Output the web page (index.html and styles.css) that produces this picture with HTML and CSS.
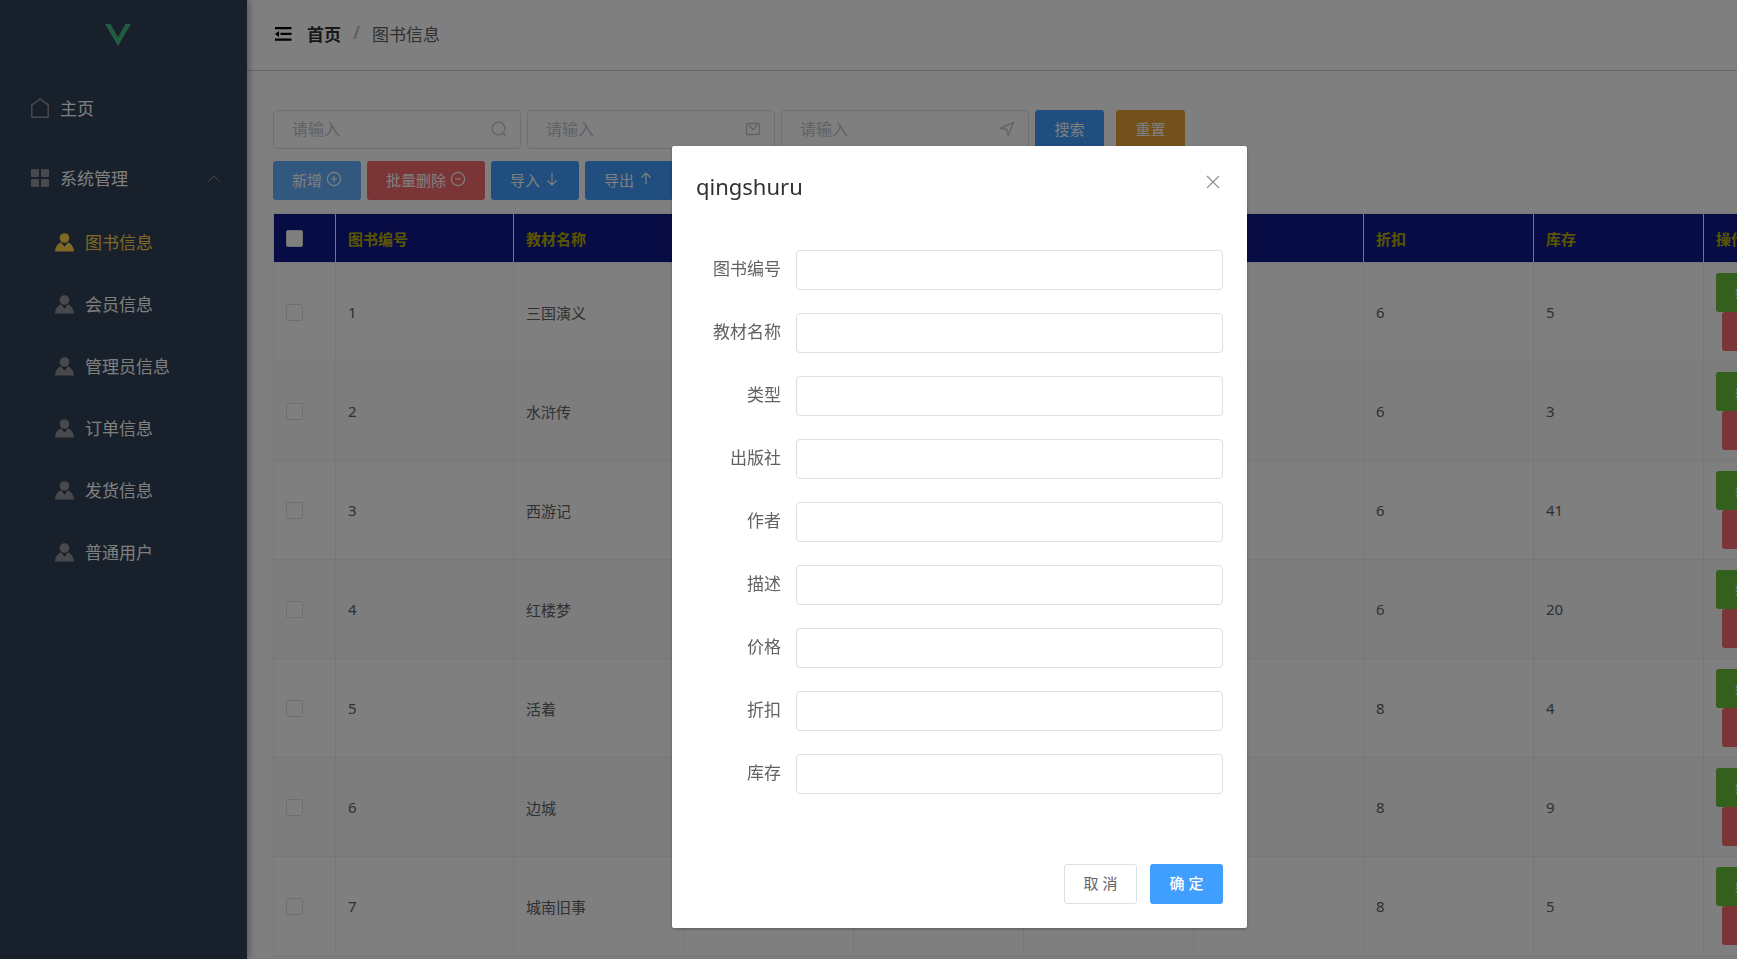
FILE: index.html
```html
<!DOCTYPE html>
<html lang="zh-CN">
<head>
<meta charset="utf-8">
<title>图书信息</title>
<link rel="stylesheet" href="styles.css">
</head>
<body>
<svg class="sprite" aria-hidden="true">
  <symbol id="user" viewBox="0 0 19 19"><circle cx="9.500" cy="5" r="4.800"/><path d="M0 18.500C.3 14 2.400 10.800 6 9.300l3.500 4.400L13 9.300c3.600 1.500 5.700 4.700 6 9.200z"/></symbol>
</svg>
<div class="app">
  <aside class="sidebar">
    <div class="logo">
      <svg width="26" height="22" viewBox="0 0 26 22" aria-label="logo"><path d="M0 0h5.500L13 13 20.500 0H26L13 22z" fill="#41b883"/></svg>
    </div>
    <nav class="menu">
      <a class="item" href="#"><svg class="icon" width="18" height="20" viewBox="0 0 18 20" fill="none" stroke="currentColor" stroke-width="1.500"><path d="M.8 7L9 1l8.200 6v12.200H.8z"/></svg><span>主页</span></a>
      <button class="item" type="button"><svg class="icon" width="18" height="18" viewBox="0 0 18 18" fill="currentColor"><rect width="8" height="8" rx="1"/><rect x="10" width="8" height="8" rx="1"/><rect y="10" width="8" height="8" rx="1"/><rect x="10" y="10" width="8" height="8" rx="1"/></svg><span>系统管理</span><svg class="caret" width="12" height="7" viewBox="0 0 12 7" fill="none" stroke="currentColor"><path d="M.5 6.500L6 1l5.500 5.500"/></svg></button>
      <a class="item sub active" href="#"><svg class="icon"><use href="#user"/></svg><span>图书信息</span></a>
      <a class="item sub" href="#"><svg class="icon"><use href="#user"/></svg><span>会员信息</span></a>
      <a class="item sub" href="#"><svg class="icon"><use href="#user"/></svg><span>管理员信息</span></a>
      <a class="item sub" href="#"><svg class="icon"><use href="#user"/></svg><span>订单信息</span></a>
      <a class="item sub" href="#"><svg class="icon"><use href="#user"/></svg><span>发货信息</span></a>
      <a class="item sub" href="#"><svg class="icon"><use href="#user"/></svg><span>普通用户</span></a>
    </nav>
  </aside>
  <div class="main">
    <header class="topbar">
      <button class="fold" type="button" aria-label="折叠菜单"><svg width="17" height="14" viewBox="0 0 17 14" fill="#000"><path d="M0 0h16.500v2.300H0zM5.500 5.800h11v2.300h-11zM0 11.500h16.500v2.300H0zM0 7l4-3v6z"/></svg></button>
      <nav class="crumbs"><a class="home" href="#">首页</a><span class="slash">/</span><span>图书信息</span></nav>
    </header>
    <main class="content">
      <form class="filters">
        <label class="field"><input type="text" placeholder="请输入" aria-label="搜索"><svg width="16" height="16" viewBox="0 0 16 16"><circle cx="7.500" cy="7.500" r="6.300"/><path d="M12 12l3 3"/></svg></label>
        <label class="field"><input type="text" placeholder="请输入" aria-label="邮件"><svg width="16" height="16" viewBox="0 0 16 16"><rect x="1.500" y="2.500" width="13" height="11" rx="1"/><path d="M3.500 4L8 8.500 12.500 4"/></svg></label>
        <label class="field"><input type="text" placeholder="请输入" aria-label="位置"><svg width="16" height="16" viewBox="0 0 16 16"><path d="M1.500 7.200L14.500 1.500 9.200 14.600 7.800 8.400z"/></svg></label>
        <div class="actions"><button class="btn primary" type="button">搜索</button><button class="btn warning" type="button">重置</button></div>
      </form>
      <div class="tools">
        <button class="btn light" type="button">新增<svg width="16" height="16" viewBox="0 0 16 16"><circle cx="8" cy="8" r="6.600"/><path d="M5 8h6M8 5v6"/></svg></button>
        <button class="btn danger" type="button">批量删除<svg width="16" height="16" viewBox="0 0 16 16"><circle cx="8" cy="8" r="6.600"/><path d="M5 8h6"/></svg></button>
        <button class="btn primary" type="button">导入<svg width="16" height="16" viewBox="0 0 16 16"><path d="M8 2v12M3.500 9.500L8 14l4.500-4.500"/></svg></button>
        <button class="btn primary" type="button">导出<svg width="16" height="16" viewBox="0 0 16 16"><path d="M8 13V2M3.500 6.500L8 2l4.500 4.500"/></svg></button>
      </div>
      <table class="grid">
        <colgroup><col class="c-check"><col class="c-id"><col class="c"><col class="c"><col class="c"><col class="c"><col class="c"><col class="c"><col class="c"><col class="c-op"></colgroup>
        <thead><tr><th><input type="checkbox" aria-label="全选"></th><th>图书编号</th><th>教材名称</th><th>类型</th><th>出版社</th><th>作者</th><th>价格</th><th>折扣</th><th>库存</th><th>操作</th></tr></thead>
        <tbody>
          <tr><td><input type="checkbox" aria-label="选择 1"></td><td>1</td><td>三国演义</td><td></td><td></td><td></td><td></td><td>6</td><td>5</td><td><div class="ops"><button class="btn success" type="button">编辑</button><button class="btn danger" type="button">删除</button></div></td></tr>
          <tr><td><input type="checkbox" aria-label="选择 2"></td><td>2</td><td>水浒传</td><td></td><td></td><td></td><td></td><td>6</td><td>3</td><td><div class="ops"><button class="btn success" type="button">编辑</button><button class="btn danger" type="button">删除</button></div></td></tr>
          <tr><td><input type="checkbox" aria-label="选择 3"></td><td>3</td><td>西游记</td><td></td><td></td><td></td><td></td><td>6</td><td>41</td><td><div class="ops"><button class="btn success" type="button">编辑</button><button class="btn danger" type="button">删除</button></div></td></tr>
          <tr><td><input type="checkbox" aria-label="选择 4"></td><td>4</td><td>红楼梦</td><td></td><td></td><td></td><td></td><td>6</td><td>20</td><td><div class="ops"><button class="btn success" type="button">编辑</button><button class="btn danger" type="button">删除</button></div></td></tr>
          <tr><td><input type="checkbox" aria-label="选择 5"></td><td>5</td><td>活着</td><td></td><td></td><td></td><td></td><td>8</td><td>4</td><td><div class="ops"><button class="btn success" type="button">编辑</button><button class="btn danger" type="button">删除</button></div></td></tr>
          <tr><td><input type="checkbox" aria-label="选择 6"></td><td>6</td><td>边城</td><td></td><td></td><td></td><td></td><td>8</td><td>9</td><td><div class="ops"><button class="btn success" type="button">编辑</button><button class="btn danger" type="button">删除</button></div></td></tr>
          <tr><td><input type="checkbox" aria-label="选择 7"></td><td>7</td><td>城南旧事</td><td></td><td></td><td></td><td></td><td>8</td><td>5</td><td><div class="ops"><button class="btn success" type="button">编辑</button><button class="btn danger" type="button">删除</button></div></td></tr>
        </tbody>
      </table>
    </main>
  </div>
</div>
<div class="overlay">
  <section class="dialog" role="dialog" aria-labelledby="dialog-title">
    <header class="dialog-head"><h2 id="dialog-title">qingshuru</h2><button class="close" type="button" aria-label="关闭"><svg width="14" height="14" viewBox="0 0 14 14" fill="none" stroke="#909399" stroke-width="1.300"><path d="M1 1l12 12M13 1L1 13"/></svg></button></header>
    <form class="form">
      <label for="f1">图书编号</label><input id="f1" type="text">
      <label for="f2">教材名称</label><input id="f2" type="text">
      <label for="f3">类型</label><input id="f3" type="text">
      <label for="f4">出版社</label><input id="f4" type="text">
      <label for="f5">作者</label><input id="f5" type="text">
      <label for="f6">描述</label><input id="f6" type="text">
      <label for="f7">价格</label><input id="f7" type="text">
      <label for="f8">折扣</label><input id="f8" type="text">
      <label for="f9">库存</label><input id="f9" type="text">
    </form>
    <footer class="dialog-foot"><button class="btn plain" type="button">取 消</button><button class="btn primary" type="button">确 定</button></footer>
  </section>
</div>
</body>
</html>
```
FILE: styles.css
```css
* { box-sizing: border-box; }
body {
  margin: 0;
  overflow: hidden;
  font-family: "Noto Sans", "Noto Sans CJK SC", sans-serif;
  font-size: 15px;
  color: #606266;
  background: #fff;
}
button, input { font: inherit; color: inherit; }
a { color: inherit; text-decoration: none; }
.sprite { position: absolute; width: 0; height: 0; }

.app { display: flex; height: 100vh; }
.sidebar {
  flex: none;
  width: 247px;
  background: #304156;
  box-shadow: 2px 0 7px rgba(0, 21, 41, .35);
  z-index: 1;
}
.logo { height: 75px; padding: 24px 0 0 105px; }
.menu { display: flex; flex-direction: column; }
.item {
  display: flex;
  align-items: center;
  height: 66px;
  margin-bottom: 4px;
  padding: 0 27px 0 31px;
  border: 0;
  background: none;
  color: #fff;
  font-size: 17px;
  text-align: left;
}
.item span { padding-bottom: 2px; }
button.item { margin-bottom: 0; }
.item .icon { flex: none; margin-right: 11px; color: #909399; fill: currentColor; }
.item .icon[fill="none"] { fill: none; }
.caret { margin-left: auto; color: #909399; }
.sub { height: 62px; margin: 0; padding-left: 55px; }
.sub .icon { width: 19px; height: 19px; }
.sub.active, .sub.active .icon { color: #ffd04b; }

.main { flex: 1; min-width: 0; display: flex; flex-direction: column; overflow: hidden; }
.topbar {
  flex: none;
  display: flex;
  align-items: center;
  height: 71px;
  padding: 0 28px 2px;
  border-bottom: 1px solid #ccc;
}
.fold { display: flex; margin-right: 15px; padding: 0; border: 0; background: none; }
.crumbs { display: flex; padding-bottom: 2px; font-size: 17px; }
.home { font-weight: 700; color: #303133; }
.slash { margin: 0 12px; color: #c0c4cc; font-weight: 700; }

.content { padding: 38px 26px 0; }
.filters { display: flex; gap: 6px; }
.field { display: flex; align-items: center; width: 248px; position: relative; }
.field input {
  width: 100%;
  height: 39px;
  padding: 0 36px 0 18px;
  border: 1px solid #dcdfe6;
  border-radius: 4px;
  background: #fff;
  font-size: 16px;
}
.field input::placeholder { color: #c0c4cc; opacity: 1; }
.field svg { position: absolute; right: 14px; fill: none; stroke: #c0c4cc; stroke-width: 1.3; }
.actions { display: flex; gap: 12px; padding-top: 1px; }
.actions .btn { min-width: 69px; }

.btn {
  display: inline-flex;
  align-items: center;
  justify-content: center;
  height: 39px;
  padding: 0 19px 3px;
  border: 0;
  border-radius: 3px;
  color: #fff;
  white-space: nowrap;
}
.btn svg { margin-left: 4px; fill: none; stroke: currentColor; stroke-width: 1.2; }
.primary { background: #409eff; }
.light { background: #66b1ff; }
.danger { background: #f56c6c; }
.warning { background: #e6a23c; }
.success { background: #67c23a; }
.tools { display: flex; gap: 6px; margin: 12px 0 13px; }

.grid {
  table-layout: fixed;
  width: 1600px;
  border-spacing: 0;
  border: 1px solid #ebeef5;
}
.c-check { width: 62px; }
.c-id { width: 178px; }
.c { width: 170px; }
.grid th, .grid td {
  padding: 0 12px;
  border-right: 1px solid #ebeef5;
  border-bottom: 1px solid #ebeef5;
  text-align: left;
}
.grid th { height: 49px; background: #10188a; color: #b4ac00; font-weight: 700; }
.grid td { height: 99px; }
.grid tbody tr:nth-child(even) { background: #fafafa; }
.grid input {
  display: block;
  appearance: none;
  width: 17px;
  height: 17px;
  margin: 0;
  border: 1px solid #dcdfe6;
  border-radius: 2px;
  background: #fff;
}
.ops { display: flex; flex-direction: column; align-items: flex-start; }
.ops .btn + .btn { margin-left: 6px; }

.overlay {
  position: fixed;
  inset: 0;
  z-index: 10;
  display: flex;
  align-items: flex-start;
  justify-content: center;
  padding: 146px 0 0 182px;
  background: rgba(0, 0, 0, .5);
}
.dialog {
  width: 575px;
  padding: 24px;
  border-radius: 2px;
  background: #fff;
  box-shadow: 0 1px 3px rgba(0, 0, 0, .3);
}
.dialog-head { display: flex; justify-content: space-between; align-items: flex-start; }
.dialog-head h2 { margin: 0; font-size: 22px; line-height: 32px; font-weight: 400; color: #303133; }
.close { display: flex; margin: 5px 3px 0 0; padding: 0; border: 0; background: none; }
.form {
  display: grid;
  grid-template-columns: 100px 1fr;
  row-gap: 23px;
  padding: 48px 0 70px;
}
.form label { padding-right: 15px; font-size: 17px; line-height: 38px; text-align: right; }
.form input { width: 100%; height: 40px; border: 1px solid #dcdfe6; border-radius: 4px; background: #fff; }
.dialog-foot { display: flex; justify-content: flex-end; gap: 13px; }
.dialog-foot .btn { height: 40px; min-width: 73px; }
.plain { border: 1px solid #dcdfe6; background: #fff; color: #606266; padding: 0 18px 3px; }
.dialog-foot .primary { font-weight: 500; }
```
